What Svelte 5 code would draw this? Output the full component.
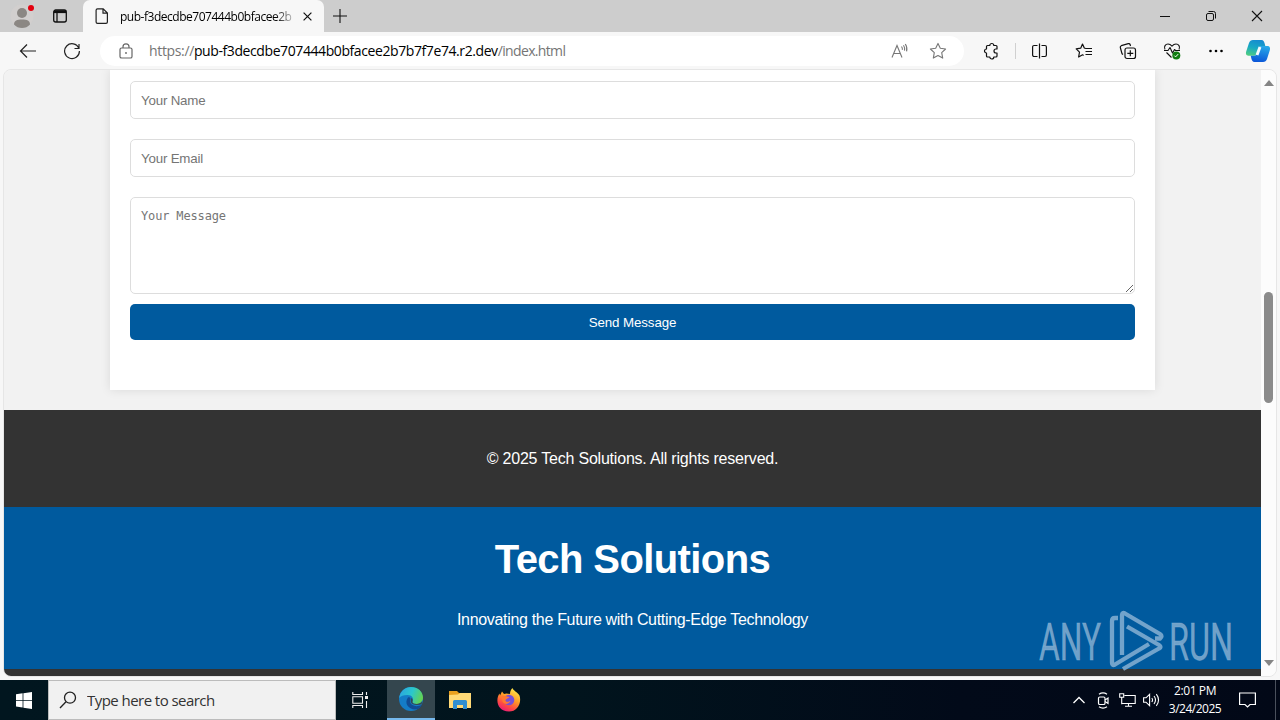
<script>
    let name = $state('');
    let email = $state('');
    let message = $state('');
    let search = $state('');
</script>

<div class="desktop">
    <div class="tabstrip">
        <div class="profile">
            <svg width="32" height="28" viewBox="0 0 32 28">
                <circle cx="16" cy="14" r="11.5" fill="#d2cfce" />
                <circle cx="16" cy="11" r="5" fill="#8b8783" />
                <path d="M8 22.5c0-4 3-5 8-5s8 1 8 5c-2 2.500-5 3.500-8 3.500s-6-1-8-3.500z" fill="#8b8783" />
                <circle cx="25" cy="6" r="3" fill="#e3000f" />
            </svg>
        </div>
        <div class="workspaces">
            <svg width="16" height="16" viewBox="0 0 16 16" fill="none" stroke="#111" stroke-width="1.3">
                <rect x="1.700" y="2" width="12.600" height="12" rx="2" />
                <path d="M2 3.700h12" stroke-width="2.800" />
                <path d="M5 4v10" />
            </svg>
        </div>
        <div class="tab">
            <svg width="14" height="16" viewBox="0 0 14 16" fill="none" stroke="#222" stroke-width="1.200">
                <path d="M2.500.800h5.700l4.200 4.300v8.800a1.400 1.400 0 0 1-1.400 1.400H2.500a1.400 1.400 0 0 1-1.400-1.400V2.200A1.400 1.400 0 0 1 2.500.800zM8 1v4.200h4.300" />
            </svg>
            <span class="tab-title">pub-f3decdbe707444b0bfacee2b</span>
            <svg class="tab-close" width="9" height="9" viewBox="0 0 9 9" stroke="#111" stroke-width="1.200">
                <path d="M.600.600l7.800 7.800M8.400.600L.600 8.400" />
            </svg>
        </div>
        <div class="new-tab">
            <svg width="14" height="14" viewBox="0 0 14 14" stroke="#111" stroke-width="1.100"><path d="M7 0v14M0 7h14" /></svg>
        </div>
        <div class="window-buttons">
            <span><svg width="12" height="12" viewBox="0 0 12 12" stroke="#111"><path d="M1 6.500h10" /></svg></span>
            <span><svg width="12" height="12" viewBox="0 0 12 12" fill="none" stroke="#111"><rect x="1.500" y="3.500" width="7" height="7" rx="1.500" /><path d="M3.500 1.500h5a2 2 0 0 1 2 2v5" /></svg></span>
            <span><svg width="12" height="12" viewBox="0 0 12 12" stroke="#111" stroke-width="1.100"><path d="M1 1l10 10M11 1L1 11" /></svg></span>
        </div>
    </div>

    <div class="toolbar">
        <span class="tool">
            <svg width="18" height="16" viewBox="0 0 18 16" fill="none" stroke="#222" stroke-width="1.200"><path d="M17 8H1.500M8 1.500L1.500 8 8 14.500" /></svg>
        </span>
        <span class="tool">
            <svg width="18" height="18" viewBox="0 0 18 18" fill="none" stroke="#222" stroke-width="1.200"><path d="M15.800 6.200A7.400 7.400 0 1 0 16.400 9M16 2v4.500h-4.500" /></svg>
        </span>
        <div class="address">
            <svg class="lock" width="14" height="16" viewBox="0 0 14 16" fill="none" stroke="#666" stroke-width="1.200">
                <rect x="1" y="5" width="12" height="10" rx="1.600" />
                <path d="M4 5V3.800a3 3 0 0 1 6 0V5" />
                <circle cx="7" cy="10" r=".900" fill="#666" stroke="none" />
            </svg>
            <span class="url"><span class="dim scheme">https://</span><span class="host">pub-f3decdbe707444b0bfacee2b7b7f7e74.r2.dev</span><span class="dim path">/index.html</span></span>
            <svg class="read-aloud" width="18" height="16" viewBox="0 0 18 16" fill="none" stroke="#777" stroke-width="1.100">
                <path d="M1 14.500L6 2.500l5 12M2.800 10.500h6.400M10.500 3.500q1.200 1.500.800 3.400M12.500 2.200q1.600 2.300 1 5.500M14.300 1q2.300 3.200 1.300 7.300" />
            </svg>
            <svg width="18" height="18" viewBox="0 0 18 18" fill="none" stroke="#777" stroke-width="1.100" stroke-linejoin="round">
                <path d="M9 1.400l2.300 4.900 5.300.700-3.900 3.700 1 5.400L9 13.500l-4.700 2.600 1-5.400L1.400 7l5.300-.700z" />
            </svg>
        </div>
        <span class="tool">
            <svg width="18" height="18" viewBox="0 0 18 18" fill="none" stroke="#111" stroke-width="1.200" stroke-linejoin="round">
                <path d="M5.500 3.500h2.300a2 2 0 0 1 4 0H14a1 1 0 0 1 1 1v2.500h-1a2 2 0 0 0 0 4h1v3a1 1 0 0 1-1 1h-2.200a2 2 0 0 1-4 0H5.500a1 1 0 0 1-1-1v-3a2 2 0 0 1 0-4V4.500a1 1 0 0 1 1-1z" />
            </svg>
        </span>
        <span class="divider"></span>
        <span class="tool">
            <svg width="18" height="16" viewBox="0 0 18 16" fill="none" stroke="#111" stroke-width="1.200">
                <path d="M8.500 .500v15M6.500 2.500H3a1.400 1.400 0 0 0-1.400 1.400v8.200A1.400 1.400 0 0 0 3 13.500h3.500M10.500 2.500H14a1.400 1.400 0 0 1 1.400 1.400v8.200a1.400 1.400 0 0 1-1.400 1.400h-3.500" />
            </svg>
        </span>
        <span class="tool">
            <svg width="18" height="18" viewBox="0 0 18 18" fill="none" stroke="#111" stroke-width="1.200" stroke-linejoin="round">
                <path d="M10.500 6.500L9.300 6 7.500 2 5.700 6.200 1.200 6.900l3.300 3.300-.900 4.800 4-2.200 1 .600M10.500 6.500H17M10.500 9.500H17M10.500 12.500H17" />
            </svg>
        </span>
        <span class="tool">
            <svg width="18" height="18" viewBox="0 0 18 18" fill="none" stroke="#111" stroke-width="1.200" stroke-linejoin="round">
                <rect x="6" y="6" width="10.500" height="10.500" rx="2" />
                <path d="M11.300 8.300v6M8.300 11.300h6M4 12.500l-1-.800L1.300 5.500c-.200-1 .200-1.500 1-1.800l7-2c1-.200 1.600.100 1.900 1L11.500 4" />
            </svg>
        </span>
        <span class="tool">
            <svg width="18" height="18" viewBox="0 0 18 18" fill="none" stroke="#111" stroke-width="1.100" stroke-linejoin="round">
                <path d="M2 7.500C.500 4.500 2.600 2 5 2c2 0 3 1 4 2.200C10 3 11 2 13 2c2.500 0 4.500 2.500 3 5.500M1 8.500h4l2-3 2.500 5.500 2-3.500 1 1H17M3.500 10.500l5 5" />
                <circle cx="13.300" cy="13.500" r="4" fill="#107c10" stroke="none" />
                <path d="M11.300 13.600l1.300 1.300 2.600-2.800" stroke="#fff" stroke-width="1" />
            </svg>
        </span>
        <span class="tool">
            <svg width="14" height="4" viewBox="0 0 14 4"><circle cx="1.500" cy="2" r="1.300" /><circle cx="7" cy="2" r="1.300" /><circle cx="12.500" cy="2" r="1.300" /></svg>
        </span>
        <span class="tool copilot">
            <svg width="26" height="24" viewBox="0 0 26 24">
                <defs>
                    <linearGradient id="copilotLeft" x1=".6" y1="0" x2=".3" y2="1">
                        <stop offset="0" stop-color="#168bd0" />
                        <stop offset=".5" stop-color="#18a9c4" />
                        <stop offset="1" stop-color="#4dcc83" />
                    </linearGradient>
                    <linearGradient id="copilotRight" x1=".6" y1="0" x2=".4" y2="1">
                        <stop offset="0" stop-color="#27a9e8" />
                        <stop offset="1" stop-color="#0b56d8" />
                    </linearGradient>
                </defs>
                <path d="M8 1h8.500c2 0 2.500 1.600 3 3l.8 3H17c-2 0-2.800 1-3.300 2.700L12 14.500c-.5 1.700-1.500 2.200-3 2.200H3.500C1 16.700.6 14.500 1.200 12.500L4 4c.7-2 2-3 4-3z" fill="url(#copilotLeft)" />
                <path d="M18 23H9.500c-2 0-2.500-1.600-3-3l-.8-3.300H9c2 0 2.800-1 3.300-2.700L14 9.500C14.500 7.600 15.500 7 17 7h5.500c2.500 0 2.900 2.300 2.300 4.300L22 20c-.7 2-2 3-4 3z" fill="url(#copilotRight)" />
                <path d="M15 8l-3 8" stroke="#f4faff" stroke-width="3" />
            </svg>
        </span>
    </div>

    <div class="viewport">
        <div class="page">
            <main>
                <form class="card">
                    <input type="text" placeholder="Your Name" bind:value={name} />
                    <input type="email" placeholder="Your Email" bind:value={email} />
                    <textarea placeholder="Your Message" bind:value={message}></textarea>
                    <button type="button">Send Message</button>
                </form>
            </main>
            <footer><p>© 2025 Tech Solutions. All rights reserved.</p></footer>
            <header>
                <h1>Tech Solutions</h1>
                <p>Innovating the Future with Cutting-Edge Technology</p>
            </header>
            <nav></nav>
        </div>
        <div class="scrollbar">
            <svg width="10" height="6" viewBox="0 0 10 6"><path d="M0 6L5 0l5 6z" fill="#858585" /></svg>
            <span class="thumb"></span>
            <svg width="10" height="6" viewBox="0 0 10 6"><path d="M0 0h10L5 6z" fill="#858585" /></svg>
        </div>
    </div>

    <div class="taskbar">
        <span class="start">
            <svg width="16" height="17" viewBox="0 0 16 17" fill="#fff">
                <path d="M0 2.300L6.600 1.300V8H0zM7.400 1.200L16 0v8H7.400zM0 8.800h6.600v6.700L0 14.500zM7.400 8.800H16V17l-8.600-1.300z" />
            </svg>
        </span>
        <div class="search">
            <svg width="18" height="18" viewBox="0 0 18 18" fill="none" stroke="#222" stroke-width="1.300"><circle cx="11" cy="6.700" r="5.500" /><path d="M7 10.700L1 17" /></svg>
            <input type="text" placeholder="Type here to search" bind:value={search} />
        </div>
        <span class="app task-view">
            <svg width="17" height="16" viewBox="0 0 17 16" fill="none" stroke="#eee" stroke-width="1.100">
                <path d="M.800 0v2.500h9.700V0M.800 16v-2.500h9.700V16M.800 4.800h9.700v6.400H.800zM14.500 0v3M14.500 9v7" />
                <rect x="13" y="4" width="3" height="3" fill="#eee" stroke="none" />
            </svg>
        </span>
        <span class="app active">
            <svg width="24" height="24" viewBox="0 0 24 24">
                <defs>
                    <linearGradient id="edgeTop" x1="0" y1=".3" x2="1" y2=".6">
                        <stop offset="0" stop-color="#2ba5df" />
                        <stop offset=".5" stop-color="#2bc7cd" />
                        <stop offset="1" stop-color="#67d34b" />
                    </linearGradient>
                </defs>
                <circle cx="12" cy="12" r="12" fill="#147cc7" />
                <path d="M.200 11C1 4.500 6 0 12 0c7 0 12 4.800 12 10.500 0 4-3 6.500-6.500 6.500-3 0-4.500-1.200-4-2.500 1.800-3-.5-6.500-5-6.500C4.500 8 1.500 9 .200 11z" fill="url(#edgeTop)" />
                <path d="M9 10.500c-4.500 6 1 13 9 11.800 2-.6 3.700-2.300 4.700-4.300-5 2.300-10.500 1-11.500-2.700-.5-2 .8-3.500-.2-4.500-.6-.6-1.300-.6-2-.3z" fill="#114c94" />
                <path d="M13.500 14.500c-.5 1.300 1 2.500 4 2.500 2.300 0 4.400-1 5.600-2.800l-.4 3c-4.500 1.500-10 .8-10.800-1.900-.4-1.600.3-3 0-4.200 1.500.5 2.200 2 1.600 3.400z" fill="#35474f" />
            </svg>
        </span>
        <span class="app">
            <svg width="22" height="20" viewBox="0 0 22 20">
                <path d="M0 1h8l2 2h11v15H0z" fill="#e9a01f" />
                <path d="M0 5l9-.500L11 3h11v15H0z" fill="#ffd976" />
                <path d="M4 11.500q0-1.500 1.500-1.500h11q1.500 0 1.500 1.500V19h-4v-4H8v4H4z" fill="#2f8ed0" />
            </svg>
        </span>
        <span class="app">
            <svg width="24" height="24" viewBox="0 0 24 24">
                <defs>
                    <linearGradient id="foxBody" x1=".8" y1="0" x2=".3" y2="1">
                        <stop offset="0" stop-color="#fff04c" />
                        <stop offset=".45" stop-color="#ff9a27" />
                        <stop offset=".75" stop-color="#ff4a43" />
                        <stop offset="1" stop-color="#ea1a78" />
                    </linearGradient>
                </defs>
                <path d="M15.500 0c.5 2.500 5 4 7 7.500C25 15.500 20 23.500 12 23.500.500 23.500-2 12 2.500 5.500l.5 2L5 3.500 7 6c2-1 3.500-.5 6 0 0-2.500.8-4.500 2.500-6z" fill="url(#foxBody)" />
                <circle cx="12" cy="12" r="5.300" fill="#7750d8" />
                <path d="M4.500 8c3-1 5 .5 8 1-1 1.800-3.500 1.300-4 3.500.5 2 3 1 5 .500-2 4-6.500 3.500-8 .500z" fill="#ff7931" />
            </svg>
        </span>
        <div class="tray">
            <span class="tray-icon"><svg width="12" height="8" viewBox="0 0 12 8" fill="none" stroke="#fff" stroke-width="1.300"><path d="M.500 7L6 1.500 11.500 7" /></svg></span>
            <span class="tray-icon">
                <svg width="14" height="17" viewBox="0 0 14 17" fill="none" stroke="#fff" stroke-width="1.200">
                    <rect x="2.500" y="5" width="6.500" height="7.500" rx="1.300" /><path d="M9 8l3-2v5.500l-3-2M3 2.200Q7-.500 11 2.200M3 14.800q4 2.700 8 0" />
                </svg>
            </span>
            <span class="tray-icon">
                <svg width="17" height="14" viewBox="0 0 17 14" fill="none" stroke="#fff" stroke-width="1.100">
                    <path d="M5.500 2.500h10.700v8H5.500M9.500 10.500v2.700M6 13.300h7M.700.700h4v3.600h-4zM2.700 4.300v7M2.700 10.500h3" />
                </svg>
            </span>
            <span class="tray-icon">
                <svg width="17" height="14" viewBox="0 0 17 14" fill="none" stroke="#fff" stroke-width="1.100">
                    <path d="M.600 4.800h2.400l3.600-3.500v11.400L3 9.200H.600zM8.800 5q1.500 2 0 4M11 3q3 4 0 8M13.300 1.200q4.500 5.800 0 11.600" />
                </svg>
            </span>
            <div class="clock"><span class="time">2:01 PM</span><span class="date">3/24/2025</span></div>
            <span class="notifications">
                <svg width="17" height="17" viewBox="0 0 17 17" fill="none" stroke="#fff" stroke-width="1.200"><path d="M.600 1h15.800v11.500H11L8.500 15 6 12.500H.600z" /></svg>
            </span>
        </div>
    </div>

    <svg class="watermark" width="210" height="68" viewBox="0 0 210 68">
        <g class="watermark-text">
            <text x="2" y="52.500" textLength="62" lengthAdjust="spacingAndGlyphs">ANY</text>
            <text x="132" y="52.500" textLength="64" lengthAdjust="spacingAndGlyphs">RUN</text>
        </g>
        <g fill="none" stroke="#8fb5d6" stroke-opacity=".8" stroke-width="4.300" stroke-linejoin="round">
            <path d="M81 11h-3q-3 0-3 3v42q0 3 3 1.500L112 37" />
            <path d="M85 48V8q0-3 3-1.500L123 27q3 2 0 4.500h-5" />
            <path d="M90 19.500L122 38q3 2 0 3.500L86 62" />
        </g>
    </svg>
</div>

<style>
    :global(body) {
        margin: 0;
        overflow: hidden;
    }

    .desktop {
        position: relative;
        display: flex;
        flex-direction: column;
        width: 1280px;
        height: 720px;
        overflow: hidden;
        background: #f7f7f7;
        font-family: "Open Sans", "Noto Sans", sans-serif;
    }

    .desktop svg {
        display: block;
        flex: none;
    }

    .tabstrip {
        display: flex;
        height: 32px;
        background: #cdcdcd;
    }

    .profile {
        width: 38px;
        padding: 2px 0 0 6px;
    }

    .workspaces {
        width: 30px;
        padding: 8px 0 0 8px;
    }

    .profile, .workspaces {
        flex: none;
        box-sizing: content-box;
    }

    .tab {
        display: flex;
        align-items: center;
        box-sizing: border-box;
        width: 241px;
        margin-left: 1px;
        padding: 0 11px 0 12px;
        border-radius: 7px 7px 0 0;
        background: #f7f7f7;
    }

    .tab-title {
        width: 172px;
        margin-left: 11px;
        overflow: hidden;
        white-space: nowrap;
        font-size: 12px;
        letter-spacing: -0.48px;
        color: #000;
        mask-image: linear-gradient(to right, #000 155px, transparent 178px);
    }

    .tab-close {
        margin-left: 11px;
    }

    .new-tab {
        padding: 9px 0 0 9px;
    }

    .window-buttons {
        display: flex;
        margin-left: auto;
    }

    .window-buttons span {
        display: flex;
        align-items: center;
        justify-content: center;
        width: 46px;
    }

    .toolbar {
        display: flex;
        align-items: center;
        height: 37px;
        padding-left: 6px;
    }

    .tool {
        display: flex;
        align-items: center;
        justify-content: center;
        width: 44px;
        height: 36px;
    }

    .tool.copilot {
        width: 40px;
    }

    .address {
        display: flex;
        align-items: center;
        box-sizing: border-box;
        width: 864px;
        height: 30px;
        margin: 0 5px 0 6px;
        padding: 0 17px 0 19px;
        border-radius: 15px;
        background: #fff;
    }

    .url {
        display: flex;
        margin-left: 16px;
        font-size: 14px;
        color: #000;
    }

    .scheme {
        letter-spacing: -0.35px;
    }

    .host {
        letter-spacing: -0.41px;
    }

    .path {
        letter-spacing: -0.65px;
    }

    .dim {
        color: #757575;
    }

    .read-aloud {
        margin: 0 20px 0 auto;
    }

    .divider {
        width: 1px;
        height: 16px;
        margin: 0 2px;
        background: #d0d0d0;
    }

    .viewport {
        display: flex;
        box-sizing: border-box;
        width: 1274px;
        height: 608px;
        margin: 0 3px;
        border: 1px solid #e6e6e6;
        border-radius: 8px;
        overflow: hidden;
    }

    .page {
        display: flex;
        flex-direction: column;
        width: 1257px;
        background: #f2f2f2;
        font-family: "Liberation Sans", Arial, sans-serif;
        color: #fff;
    }

    main {
        padding: 0 106px 20px;
    }

    .card {
        display: flex;
        flex-direction: column;
        box-sizing: border-box;
        height: 320px;
        padding: 11px 20px 0;
        background: #fff;
        box-shadow: 0 0 10px rgba(0, 0, 0, 0.1);
    }

    .card input, .card textarea {
        box-sizing: border-box;
        margin: 0 0 20px;
        padding: 10px;
        border: 1px solid #ddd;
        border-radius: 5px;
        background: #fff;
        font-size: 13.333px;
    }

    .card input {
        height: 38px;
        font-family: "Liberation Sans", Arial, sans-serif;
        letter-spacing: -0.2px;
    }

    .card textarea {
        height: 97px;
        margin-bottom: 10px;
        padding-top: 11px;
        font-family: "DejaVu Sans Mono", monospace;
        font-size: 12px;
        letter-spacing: -0.15px;
    }

    .card input::placeholder, .card textarea::placeholder {
        color: #757575;
    }

    .card button {
        height: 36px;
        padding: 0;
        border: 0;
        border-radius: 5px;
        background: #005a9e;
        color: #fff;
        font-family: "Liberation Sans", Arial, sans-serif;
        font-size: 13.333px;
        letter-spacing: -0.1px;
    }

    footer {
        box-sizing: border-box;
        height: 97px;
        padding-top: 40px;
        background: #333;
        text-align: center;
    }

    footer p, header p {
        margin: 0;
        font-size: 16px;
        line-height: 18px;
    }

    footer p {
        letter-spacing: -0.21px;
    }

    header p {
        letter-spacing: -0.32px;
    }

    header {
        box-sizing: border-box;
        height: 162px;
        padding-top: 29px;
        background: #005a9e;
        text-align: center;
    }

    h1 {
        margin: 0 0 29px;
        font-size: 40px;
        line-height: 46px;
        letter-spacing: -0.6px;
    }

    nav {
        flex: 1;
        background: #333;
    }

    .scrollbar {
        display: flex;
        flex-direction: column;
        align-items: center;
        box-sizing: border-box;
        width: 15px;
        padding: 10px 0;
        background: #fcfcfc;
    }

    .thumb {
        width: 9px;
        height: 111px;
        margin: 206px 0 auto;
        border-radius: 5px;
        background: #8b8b8b;
    }

    .taskbar {
        display: flex;
        height: 40px;
        margin-top: auto;
        background: linear-gradient(to right, #01161f, #01141d 45%, #020a19 75%, #020817);
        color: #fff;
    }

    .start, .app, .tray-icon, .notifications {
        display: flex;
        align-items: center;
        justify-content: center;
    }

    .start {
        width: 48px;
    }

    .search {
        display: flex;
        align-items: center;
        gap: 10px;
        box-sizing: border-box;
        width: 288px;
        padding-left: 10px;
        border: 1px solid #bcbcbc;
        background: #f1f1f1;
    }

    .search input {
        width: 200px;
        padding: 0;
        border: 0;
        background: transparent;
        font-family: "Open Sans", "Noto Sans", sans-serif;
        font-size: 15px;
        letter-spacing: -0.55px;
    }

    .search input::placeholder {
        color: #333;
    }

    .app {
        width: 49px;
    }

    .app.task-view {
        width: 51px;
        padding-right: 2px;
        box-sizing: border-box;
    }

    .app.active {
        box-sizing: border-box;
        width: 48px;
        border-bottom: 2px solid #76b9ed;
        background: #34464e;
    }

    .tray {
        display: flex;
        margin-left: auto;
    }

    .tray-icon {
        width: 24px;
    }

    .clock {
        display: flex;
        flex-direction: column;
        align-items: center;
        width: 64px;
        padding-top: 2px;
        font-size: 12px;
        line-height: 18px;
        white-space: nowrap;
    }

    .time {
        letter-spacing: -0.4px;
    }

    .date {
        letter-spacing: -0.5px;
    }

    .notifications {
        box-sizing: border-box;
        width: 49px;
        margin-right: 4px;
        padding-right: 8px;
        border-right: 1px solid #4a505c;
    }

    .watermark {
        position: absolute;
        top: 607px;
        left: 1037px;
    }

    .watermark-text {
        fill: #8fb5d6;
        fill-opacity: 0.8;
        font-family: Roboto, sans-serif;
        font-size: 52px;
        stroke: #8fb5d6;
        stroke-opacity: 0.4;
        stroke-width: 0.8px;
    }
</style>
